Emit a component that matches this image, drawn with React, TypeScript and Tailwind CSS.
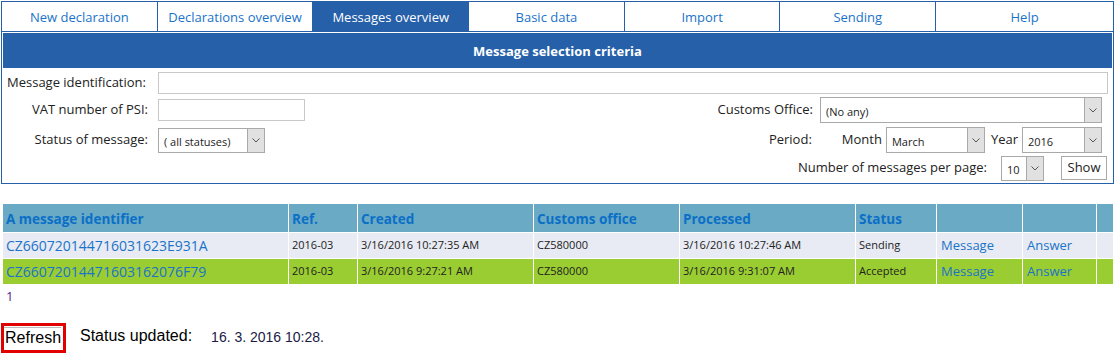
import React from "react";

const tabs = [
  "New declaration",
  "Declarations overview",
  "Messages overview",
  "Basic data",
  "Import",
  "Sending",
  "Help",
];

const rows = [
  {
    id: "CZ660720144716031623E931A",
    ref: "2016-03",
    created: "3/16/2016 10:27:35 AM",
    office: "CZ580000",
    processed: "3/16/2016 10:27:46 AM",
    status: "Sending",
    bg: "bg-[#e8ebf3]",
  },
  {
    id: "CZ66072014471603162076F79",
    ref: "2016-03",
    created: "3/16/2016 9:27:21 AM",
    office: "CZ580000",
    processed: "3/16/2016 9:31:07 AM",
    status: "Accepted",
    bg: "bg-[#9acd32]",
  },
];

function Select({ value, className }: { value: string; className: string }) {
  return (
    <div className={`flex border border-[#a9a9a9] bg-white ${className}`}>
      <span className="flex-1 pl-[5px] text-[11px] leading-none self-center text-[#222] pt-[2px]">{value}</span>
      <span className="w-[17px] bg-[#e1e1e1] border-l border-[#a9a9a9] flex items-center justify-center">
        <svg width="8" height="5" viewBox="0 0 8 5">
          <path d="M0.5 0.5 L4 4 L7.5 0.5" fill="none" stroke="#555" strokeWidth="1" />
        </svg>
      </span>
    </div>
  );
}

export default function App() {
  return (
    <div className="w-[1115px] h-[356px] bg-white overflow-hidden font-['Open_Sans',sans-serif] text-[13px] text-[#222]">
      {/* tabs */}
      <div className="mx-[1px] mt-[1px] flex h-[31px] border border-[#2660a9]">
        {tabs.map((t, i) => (
          <div
            key={t}
            className={`flex items-center justify-center pt-[3px] ${i === tabs.length - 1 ? "flex-1" : "w-[155.7px] border-r border-[#2660a9]"} ${
              i === 2 ? "bg-[#2660a9] text-white" : "text-[#1a73c8]"
            }`}
          >
            {t}
          </div>
        ))}
      </div>

      {/* selection criteria */}
      <div className="mx-[1px] h-[152px] border border-t-0 border-[#2660a9] px-[1px] pt-[1px]">
        <div className="h-[35px] bg-[#2660a9] flex items-center justify-center pt-[2px] text-white font-bold">
          Message selection criteria
        </div>
        <div className="flex items-center mt-[4px] h-[22px]">
          <span className="w-[155px] pl-[4px]">Message identification:</span>
          <div className="w-[950px] h-[22px] border border-[#c8c8c8]" />
        </div>
        <div className="flex justify-between mt-[3px] h-[26px] items-center pr-[10px]">
          <div className="flex items-center">
            <span className="w-[145px] text-right">VAT number of PSI:</span>
            <div className="ml-[10px] w-[147px] h-[22px] border border-[#c8c8c8]" />
          </div>
          <div className="flex items-center">
            <span>Customs Office:</span>
            <Select value="(No any)" className="ml-[7px] w-[282px] h-[26px]" />
          </div>
        </div>
        <div className="flex justify-between mt-[4px] h-[26px] items-center pr-[10px]">
          <div className="flex items-center">
            <span className="w-[145px] text-right">Status of message:</span>
            <Select value="( all statuses)" className="ml-[10px] w-[107px] h-[25px]" />
          </div>
          <div className="flex items-center">
            <span>Period:</span>
            <span className="ml-[30px]">Month</span>
            <Select value="March" className="ml-[4px] w-[99px] h-[26px]" />
            <span className="ml-[6px]">Year</span>
            <Select value="2016" className="ml-[4px] w-[80px] h-[26px]" />
          </div>
        </div>
        <div className="flex justify-end items-center mt-[2px] h-[26px] pr-[5px]">
          <span>Number of messages per page:</span>
          <Select value="10" className="ml-[14px] w-[43px] h-[25px]" />
          <div className="ml-[17px] w-[46px] h-[24px] border border-[#a9a9a9] flex items-center justify-center">Show</div>
        </div>
      </div>

      {/* table */}
      <div className="mt-[20px] ml-[3px] w-[1110px] grid grid-cols-[285px_68px_175px_145px_175px_80px_85px_73px_1fr] gap-[1px]">
        {["A message identifier", "Ref.", "Created", "Customs office", "Processed", "Status", "", "", ""].map((h, i) => (
          <div key={i} className="h-[28px] bg-[#6aaac4] flex items-center pl-[3px] pt-[2px] font-bold text-[13.5px] text-[#0b6fc7]">
            {h}
          </div>
        ))}
        {rows.map((r) => (
          <React.Fragment key={r.id}>
            <div className={`${r.bg} h-[25px] flex items-center pl-[3px] text-[14px] text-[#1a73c8]`}>{r.id}</div>
            <div className={`${r.bg} h-[25px] flex items-center pl-[3px] text-[11px]`}>{r.ref}</div>
            <div className={`${r.bg} h-[25px] flex items-center pl-[3px] text-[11px]`}>{r.created}</div>
            <div className={`${r.bg} h-[25px] flex items-center pl-[3px] text-[11px]`}>{r.office}</div>
            <div className={`${r.bg} h-[25px] flex items-center pl-[3px] text-[11px]`}>{r.processed}</div>
            <div className={`${r.bg} h-[25px] flex items-center pl-[3px] text-[11px]`}>{r.status}</div>
            <div className={`${r.bg} h-[25px] flex items-center pl-[4px] text-[#1a73c8]`}>Message</div>
            <div className={`${r.bg} h-[25px] flex items-center pl-[4px] text-[#1a73c8]`}>Answer</div>
            <div className={`${r.bg} h-[25px]`} />
          </React.Fragment>
        ))}
      </div>

      <div className="ml-[6px] mt-[3px] text-[#551a8b]">1</div>

      {/* refresh */}
      <div className="mt-[16px] flex items-center font-['Liberation_Sans',sans-serif]">
        <div className="ml-[1px] w-[65px] h-[30px] border-[3px] border-[#e00000] flex items-center">
          <span className="pl-[1px] text-[16px] text-black border-t border-[#bbb] leading-[20px]">Refresh</span>
        </div>
        <span className="ml-[14px] text-[16px] text-black -mt-[4px]">Status updated:</span>
        <span className="ml-[19px] text-[14px] text-[#1a1a46]">16. 3. 2016 10:28.</span>
      </div>
    </div>
  );
}
